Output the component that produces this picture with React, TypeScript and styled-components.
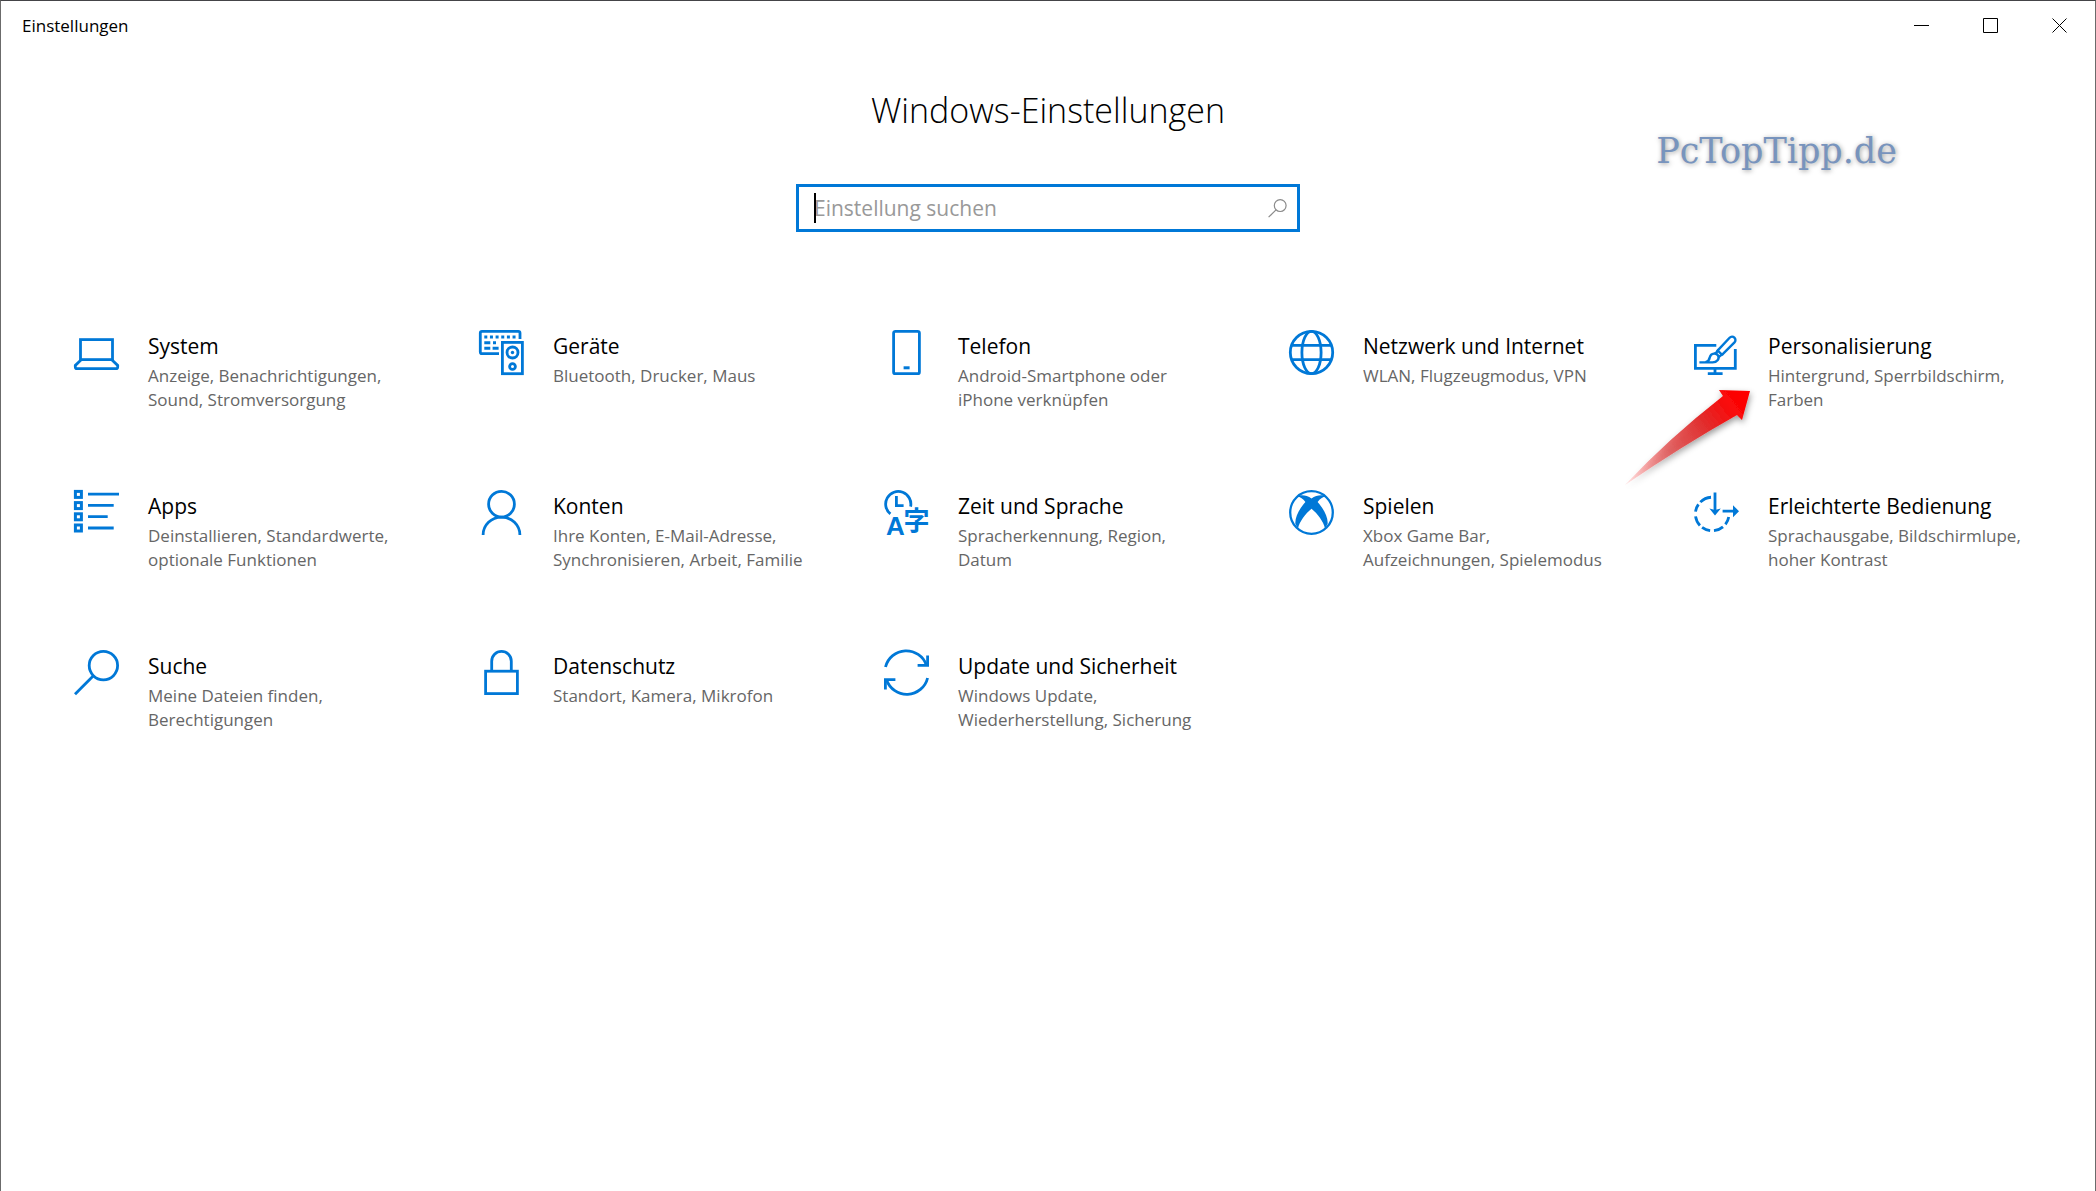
import React from 'react';
import styled, { createGlobalStyle } from 'styled-components';

const accent = '#0078d7';

const GlobalStyle = createGlobalStyle`
  *, *::before, *::after { box-sizing: border-box; }
  body { margin: 0; background: #fff; }
  body, button, input { font-family: 'Open Sans', 'Noto Sans', sans-serif; }
`;

const Window = styled.div`
  min-height: 100vh;
  border: 1px solid #6b6b6b;
  border-top-color: #444447;
  border-bottom: 0;
  background: #fff;
  color: #000;
`;

const TitleBar = styled.header`
  display: flex;
  align-items: center;
  justify-content: space-between;
  height: 49px;
  padding: 0 1px 0 21px;
`;

const WindowTitle = styled.span`
  font-size: 17px;
  line-height: 24px;
`;

const WindowControls = styled.div`
  display: flex;
  align-self: stretch;
`;

const ControlButton = styled.button`
  display: flex;
  align-items: center;
  justify-content: center;
  width: 69px;
  padding: 0;
  border: 0;
  background: none;
`;

const Hero = styled.section`
  position: relative;
  display: flex;
  flex-direction: column;
  align-items: center;
  gap: 50px;
  padding-top: 36px;
`;

const PageTitle = styled.h1`
  margin: 0;
  font-size: 34px;
  font-weight: 300;
  line-height: 48px;
`;

const Watermark = styled.span`
  position: absolute;
  top: 81px;
  right: 198px;
  color: #7894bd;
  font-family: 'DejaVu Serif', serif;
  font-size: 35px;
  line-height: 40px;
  text-shadow: 1px 1px 5px rgba(0, 0, 0, 0.4);
`;

const SearchBox = styled.label`
  position: relative;
  display: flex;
  align-items: center;
  width: 504px;
  height: 48px;
  padding: 0 10px 0 15px;
  border: 3px solid ${accent};
`;

const SearchInput = styled.input`
  flex: 1;
  min-width: 0;
  padding: 0;
  border: 0;
  outline: 0;
  background: none;
  font-size: 21px;
  line-height: 30px;
  &::placeholder { color: #999; opacity: 1; }
`;

const Caret = styled.span`
  position: absolute;
  top: 6px;
  left: 15px;
  width: 2px;
  height: 30px;
  background: #000;
`;

const Categories = styled.nav`
  display: grid;
  grid-template-columns: repeat(5, 1fr);
  padding: 90px 34px 0 35px;
`;

const Tile = styled.a`
  position: relative;
  display: flex;
  gap: 29px;
  min-height: 160px;
  padding: 8px 0 0 38px;
  color: inherit;
  text-decoration: none;
`;

const TileIcon = styled.svg`
  flex: none;
  width: 45px;
  height: 45px;
  overflow: visible;
  fill: none;
  stroke: ${accent};
  stroke-width: 2.8;
`;

const TileText = styled.span`
  display: flex;
  flex-direction: column;
  gap: 2px;
  width: 256px;
`;

const TileTitle = styled.span`
  font-size: 21px;
  line-height: 32px;
  white-space: nowrap;
`;

const TileDescription = styled.span`
  color: #666;
  font-size: 17px;
  line-height: 24px;
`;

const Pointer = styled.svg`
  position: absolute;
  top: 60px;
  left: -40px;
  pointer-events: none;
  overflow: visible;
`;

const solid = { fill: accent, stroke: 'none' };

const arc = (from: number, to: number) => {
  const at = (deg: number) => {
    const a = (deg * Math.PI) / 180;
    return `${(18.2 + 16.8 * Math.cos(a)).toFixed(2)} ${(24 + 16.8 * Math.sin(a)).toFixed(2)}`;
  };
  return `M${at(from)}A16.8 16.8 0 0 1 ${at(to)}`;
};

const icons: Record<string, React.ReactNode> = {
  system: (
    <>
      <rect x="6.5" y="9.6" width="32" height="20" />
      <path d="M7.5 29.6 1.3 35.4V37Q1.3 38.7 3 38.7H42Q43.7 38.7 43.7 37V35.4L37.5 29.6" />
    </>
  ),
  devices: (
    <>
      <path d="M41 9V3Q41 1.3 39.3 1.3H3Q1.3 1.3 1.3 3V22Q1.3 23.7 3 23.7H20" />
      <path strokeWidth="3" strokeDasharray="3 2.65" d="M5.3 7H37" />
      <path strokeWidth="3" d="M5.3 12.7h6M14 12.7h3M5.3 18.3h6M13.6 18.3h6" />
      <rect x="23.4" y="12.4" width="20" height="31.3" />
      <circle cx="33.5" cy="22.5" r="5.5" />
      <circle cx="33.5" cy="22.5" r="1.7" {...solid} />
      <circle cx="33.5" cy="36.5" r="2.9" />
    </>
  ),
  phone: (
    <>
      <rect x="9.6" y="1.3" width="25.8" height="42.4" rx="1.8" />
      <path strokeWidth="3" d="M19.6 37.8h6" />
    </>
  ),
  network: (
    <>
      <circle cx="22.5" cy="22.5" r="21.2" />
      <ellipse cx="22.5" cy="22.5" rx="9.6" ry="21.2" />
      <path d="M2.5 15.3h40M2.5 29.7h40" />
    </>
  ),
  personal: (
    <>
      <path d="M22.3 15.4H1.4V38.4H41.3V19M21 38.4V43.6M13.8 43.6H28.6" />
      <path strokeWidth="2.4" d="M23.8 20.4 35.6 7.7a3.3 3.3 0 0 1 4.9 4.7L28.2 24.6" />
      <path strokeWidth="2.4" d="M22.8 19.6 28.8 25.5M5.4 32.4H18.6C23 32.4 25.6 29 24.2 25.8 22.5 22.6 17 22.6 15.8 27.2 15.4 29.6 14.4 31.4 11.6 32.2" />
      <path strokeWidth="2.4" d="M20.6 24.2 24 20.8M24.4 27.4 28 24.4" />
    </>
  ),
  apps: (
    <>
      {[0, 11.2, 22.4, 33.6].map((y) => (
        <rect key={y} x="1.4" y={y + 1.4} width="6" height="6" strokeWidth="3" />
      ))}
      <path d="M14 4.1H45M14 15.4H39.7M14 26.7H33.7M14 38H39.7" />
    </>
  ),
  accounts: (
    <>
      <circle cx="22.5" cy="14.2" r="12.9" />
      <path d="M4.1 45A18.4 17.9 0 0 1 40.9 45" />
    </>
  ),
  language: (
    <>
      <path d="M6.4 23.9A12.6 12.6 0 1 1 26.6 16.6" />
      <path d="M12.4 6V15.6H19.6" />
      <text x="2" y="45" fontFamily="'Liberation Sans', sans-serif" fontSize="26" fontWeight="700" {...solid}>A</text>
      <text x="19.6" y="40" fontFamily="'Noto Sans CJK JP', sans-serif" fontSize="26" fontWeight="700" {...solid}>字</text>
    </>
  ),
  gaming: (
    <>
      <circle cx="22.5" cy="22.5" r="21.3" strokeWidth="2.3" />
      <path {...solid} d="M8 6.6C12 4.2 18 5.6 22.5 8.4 27 5.6 33 4.2 37 6.6 33.6 6.8 31 9 28.6 12 33.6 17.4 39.4 27 38.6 34L36 38.4C34.5 31.5 28.4 23.6 22.5 18.8 16.6 23.6 10.5 31.5 9 38.4L6.4 34C5.6 27 11.4 17.4 16.4 12 14 9 11.4 6.8 8 6.6Z" />
    </>
  ),
  access: (
    <>
      <path d={[arc(10, 38), arc(50, 84), arc(97, 127), arc(137, 172), arc(188, 215), arc(225, 266)].join('')} />
      <path d="M21 2.6V20M28.6 21.2H40" />
      <path {...solid} d="M15.4 18.6 21 20 26.8 18.6 21 25.4ZM39 15.2 45 21.2 39 27.2Z" />
    </>
  ),
  search: (
    <>
      <circle cx="29.4" cy="15.6" r="14.2" />
      <path d="M19.4 25.8 1 44.2" />
    </>
  ),
  privacy: (
    <>
      <rect x="6.6" y="21.2" width="31.8" height="22.4" />
      <path d="M12.7 21V11.2A9.8 9.8 0 0 1 32.3 11.2V21" />
    </>
  ),
  update: (
    <>
      <path d="M1.5 17A21.4 21.4 0 0 1 42.4 15M43.6 28A21.4 21.4 0 0 1 2.6 30" />
      <path d="M43.6 5.4V15.4H33.6M1.4 39.6V29.6H11.4" />
    </>
  ),
};

const categories = [
  ['system', 'System', 'Anzeige, Benachrichtigungen, Sound, Stromversorgung'],
  ['devices', 'Geräte', 'Bluetooth, Drucker, Maus'],
  ['phone', 'Telefon', 'Android-Smartphone oder iPhone verknüpfen'],
  ['network', 'Netzwerk und Internet', 'WLAN, Flugzeugmodus, VPN'],
  ['personal', 'Personalisierung', 'Hintergrund, Sperrbildschirm, Farben'],
  ['apps', 'Apps', 'Deinstallieren, Standardwerte, optionale Funktionen'],
  ['accounts', 'Konten', 'Ihre Konten, E-Mail-Adresse, Synchronisieren, Arbeit, Familie'],
  ['language', 'Zeit und Sprache', 'Spracherkennung, Region, Datum'],
  ['gaming', 'Spielen', 'Xbox Game Bar, Aufzeichnungen, Spielemodus'],
  ['access', 'Erleichterte Bedienung', 'Sprachausgabe, Bildschirmlupe, hoher Kontrast'],
  ['search', 'Suche', 'Meine Dateien finden, Berechtigungen'],
  ['privacy', 'Datenschutz', 'Standort, Kamera, Mikrofon'],
  ['update', 'Update und Sicherheit', 'Windows Update, Wiederherstellung, Sicherung'],
];

const controls = [
  ['Minimieren', 'M0 7.5H15'],
  ['Maximieren', 'M.5 .5H14.5V14.5H.5Z'],
  ['Schließen', 'M.5 .5 14.5 14.5M14.5 .5 .5 14.5'],
];

function RedArrow() {
  return (
    <Pointer width="148" height="116" viewBox="0 0 148 116" aria-hidden="true">
      <defs>
        <linearGradient id="arrowFill" gradientUnits="userSpaceOnUse" x1="9" y1="103" x2="133" y2="9">
          <stop offset="0" stopColor="#f33" stopOpacity="0.1" />
          <stop offset="0.35" stopColor="#e04545" stopOpacity="0.75" />
          <stop offset="0.65" stopColor="#e22c2c" />
          <stop offset="0.85" stopColor="#fa0808" />
          <stop offset="1" stopColor="#f00" />
        </linearGradient>
        <filter id="arrowShadow" x="-20%" y="-20%" width="150%" height="150%">
          <feDropShadow dx="1" dy="3" stdDeviation="3" floodColor="#000" floodOpacity="0.4" />
        </filter>
      </defs>
      <path
        d="M9 103Q52 57 107 14L103 8 134 9 126 38 121 33Q66 64 9 103Z"
        fill="url(#arrowFill)"
        filter="url(#arrowShadow)"
      />
    </Pointer>
  );
}

export default function App() {
  return (
    <Window>
      <GlobalStyle />
      <TitleBar>
        <WindowTitle>Einstellungen</WindowTitle>
        <WindowControls>
          {controls.map(([label, d]) => (
            <ControlButton key={label} type="button" aria-label={label}>
              <svg width="15" height="15" viewBox="0 0 15 15" fill="none" stroke="#000" aria-hidden="true">
                <path d={d} />
              </svg>
            </ControlButton>
          ))}
        </WindowControls>
      </TitleBar>
      <main>
        <Hero>
          <PageTitle>Windows-Einstellungen</PageTitle>
          <SearchBox>
            <SearchInput type="text" placeholder="Einstellung suchen" aria-label="Einstellung suchen" />
            <Caret />
            <svg width="19" height="19" viewBox="0 0 19 19" fill="none" stroke="#8a8a8a" strokeWidth="1.2" aria-hidden="true">
              <circle cx="12.2" cy="6.6" r="5.9" />
              <path d="M8 10.8.6 18.2" />
            </svg>
          </SearchBox>
          <Watermark>PcTopTipp.de</Watermark>
        </Hero>
        <Categories aria-label="Kategorien">
          {categories.map(([id, title, description]) => (
            <Tile key={id} href={`#${id}`}>
              <TileIcon viewBox="0 0 45 45" aria-hidden="true">{icons[id]}</TileIcon>
              <TileText>
                <TileTitle>{title}</TileTitle>
                <TileDescription>{description}</TileDescription>
              </TileText>
              {id === 'personal' && <RedArrow />}
            </Tile>
          ))}
        </Categories>
      </main>
    </Window>
  );
}
